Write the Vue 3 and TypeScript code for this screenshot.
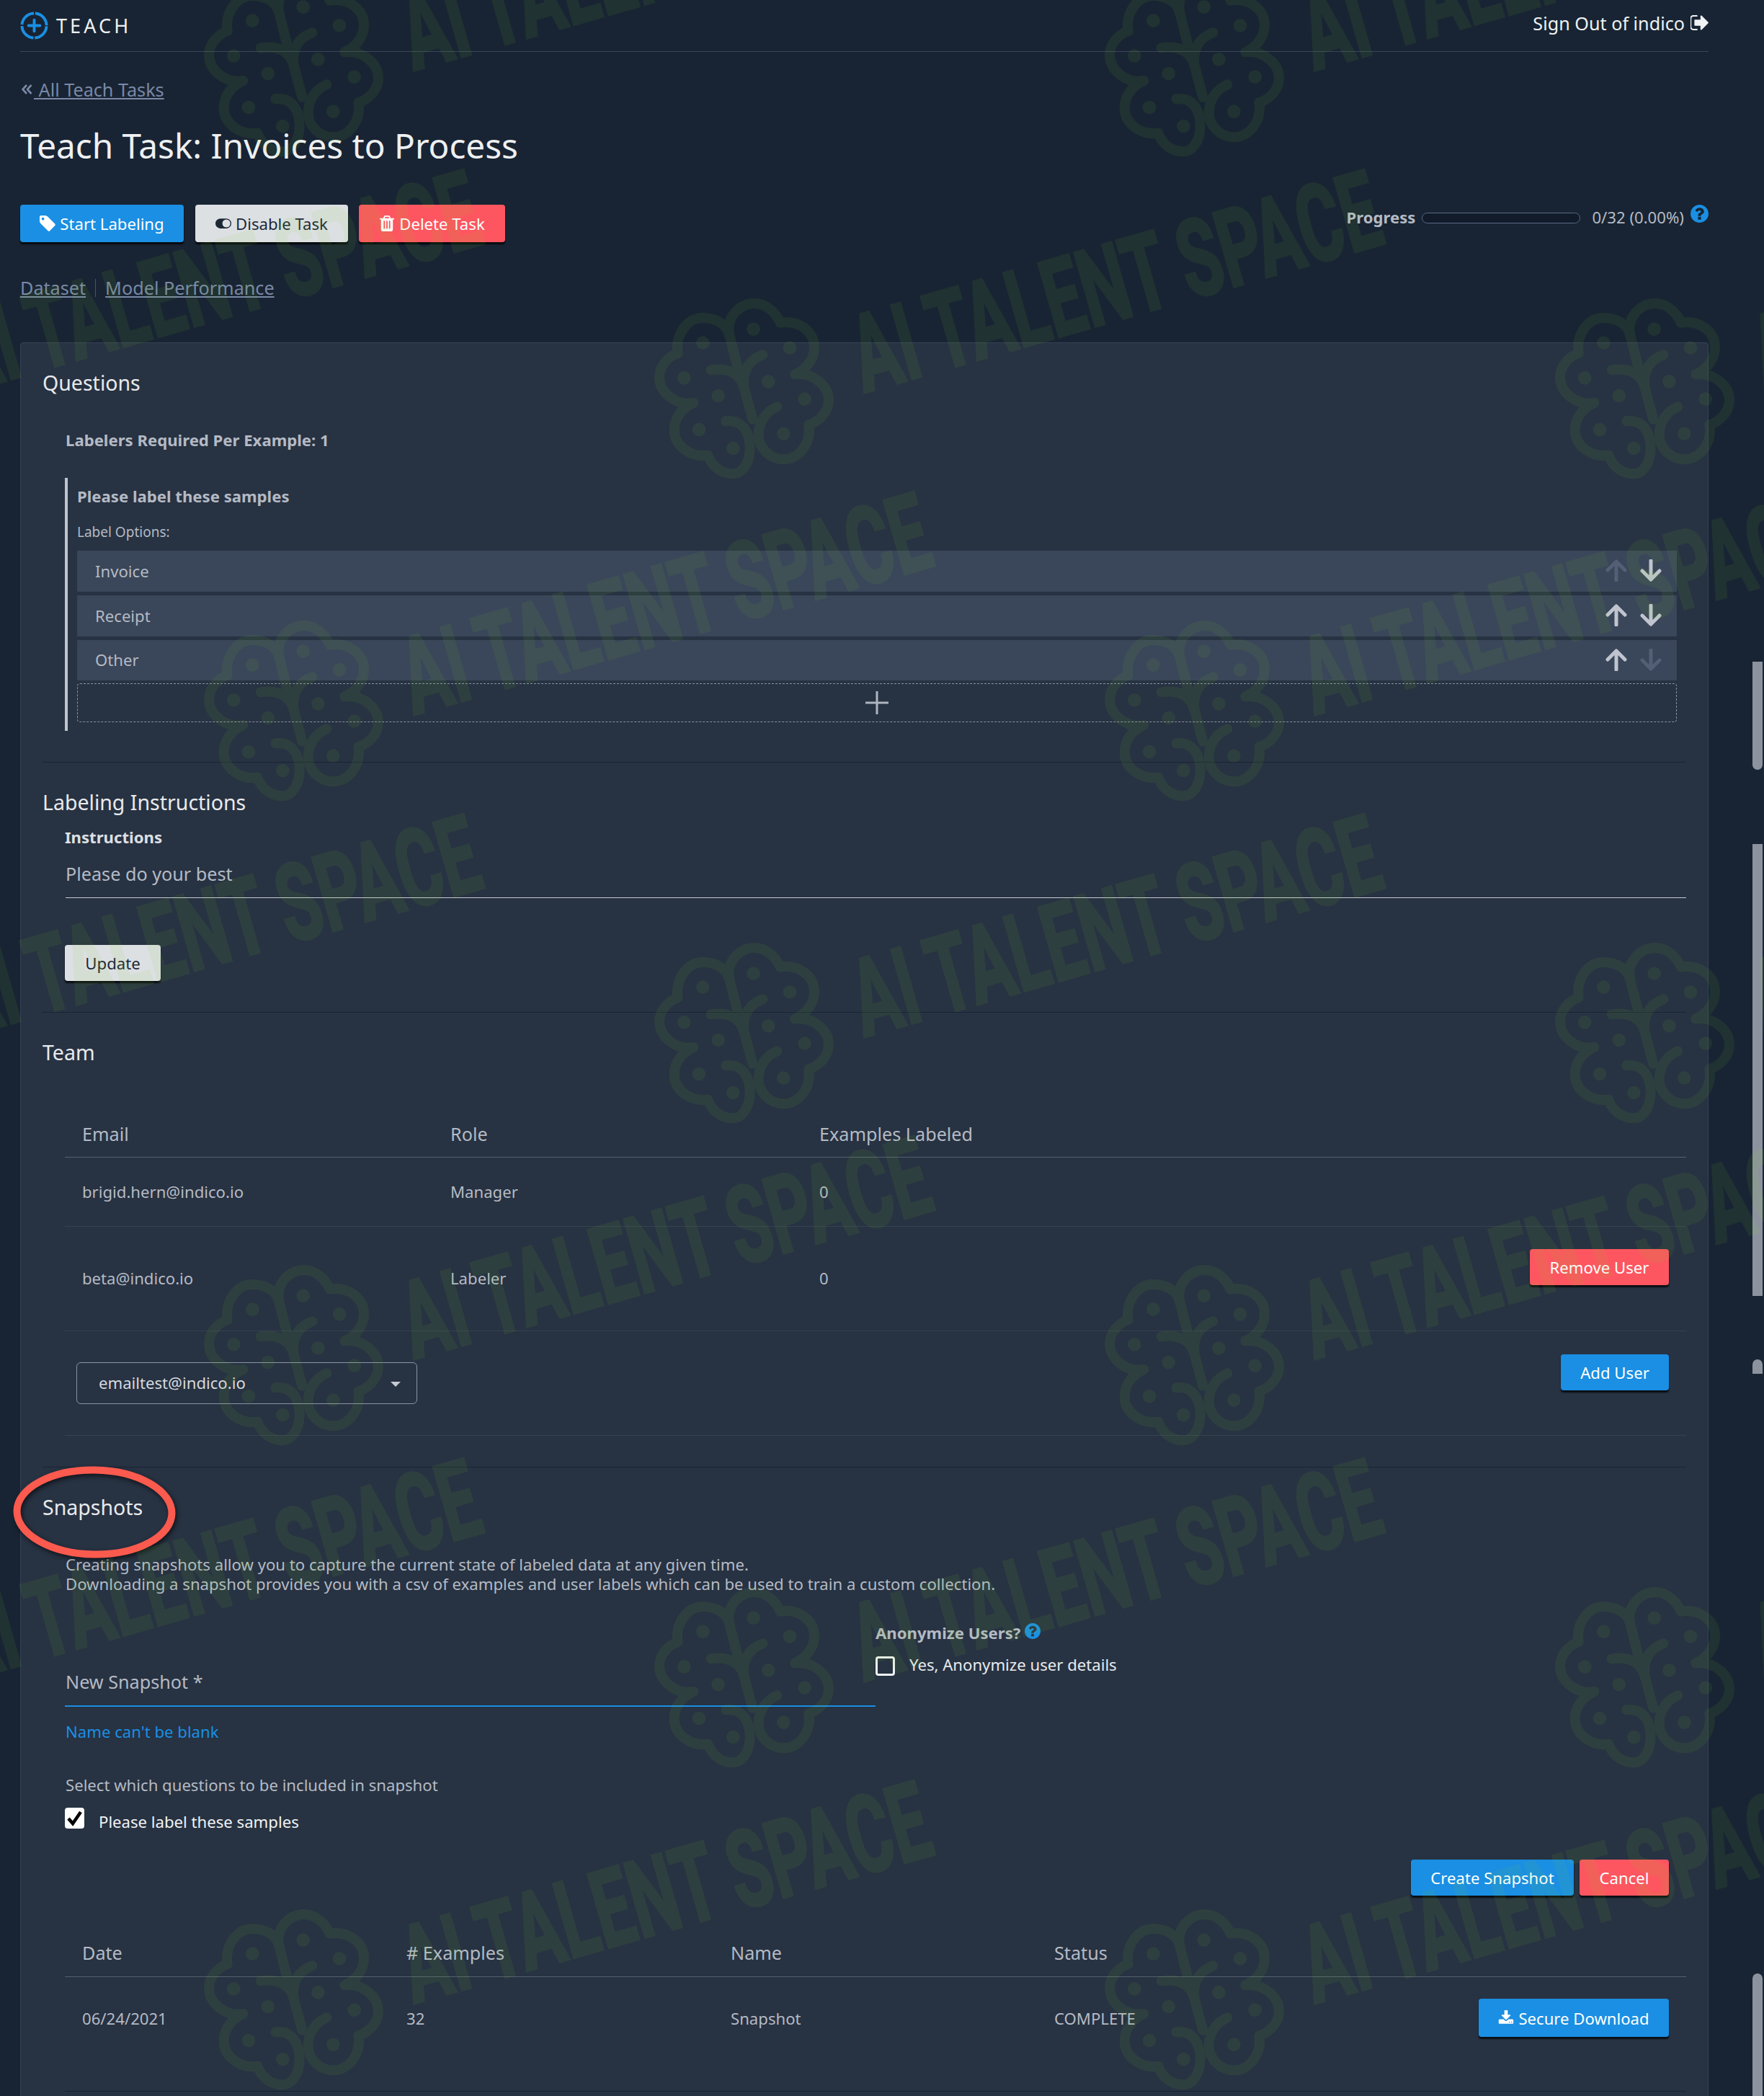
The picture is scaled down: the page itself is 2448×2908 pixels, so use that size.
<template>
  <div class="page">
    <div class="wrap">
      <header class="topbar">
        <svg class="logo" viewBox="0 0 40 40">
          <circle cx="20" cy="20" r="17.5" fill="none" stroke="#1a8fe3" stroke-width="4" stroke-dasharray="25.5 2" stroke-dashoffset="-1" />
          <path d="M20 12v16M12 20h16" fill="none" stroke="#1a8fe3" stroke-width="4" stroke-linecap="round" />
        </svg>
        <span class="brand">TEACH</span>
        <span class="signout">
          Sign Out of indico
          <svg class="signout-icon" viewBox="128 256 1504 1280"><path fill="#f0f2f4" :d="icons.signOut" /></svg>
        </span>
      </header>

      <div class="back">
        <svg class="back-arrows" viewBox="0 0 15 14"><path d="M7 1 1.5 7 7 13M13.5 1 8 7l5.5 6" /></svg>
        <a class="link"> All Teach Tasks</a>
      </div>
      <h1 class="title">Teach Task: Invoices to Process</h1>

      <div class="actions">
        <button class="btn blue"><svg class="ico" viewBox="128 128 1536 1536"><path fill="currentColor" :d="icons.tag" /></svg>Start Labeling</button>
        <button class="btn grey"><svg class="ico toggle" viewBox="0 256 2048 1280"><path fill="currentColor" :d="icons.toggle" /></svg>Disable Task</button>
        <button class="btn red"><svg class="ico" viewBox="128 128 1536 1536"><path fill="currentColor" :d="icons.trash" /></svg>Delete Task</button>
        <div class="progress">
          <strong>Progress</strong>
          <span class="bar"></span>
          <span class="count">0/32 (0.00%)</span>
          <svg class="help" viewBox="128 128 1536 1536"><path fill="#1a8fe3" :d="icons.help" /></svg>
        </div>
      </div>

      <nav class="links">
        <a class="link">Dataset</a>
        <span class="sep"></span>
        <a class="link">Model Performance</a>
      </nav>

      <main class="panel">
        <section>
          <h2>Questions</h2>
          <div class="required">Labelers Required Per Example: 1</div>
          <div class="question">
            <div class="q-title">Please label these samples</div>
            <div class="q-sub">Label Options:</div>
            <div class="options">
              <div v-for="(opt, i) in options" :key="opt" class="option">
                <span>{{ opt }}</span>
                <span class="arrows">
                  <svg class="arrow" :class="{ off: i === 0 }" viewBox="0 0 30 31"><path d="M15 29V3M3 15 15 3l12 12" /></svg>
                  <svg class="arrow" :class="{ off: i === options.length - 1 }" viewBox="0 0 30 31"><path d="M15 2v26M3 16l12 12 12-12" /></svg>
                </span>
              </div>
            </div>
            <div class="add">
              <svg class="plus" viewBox="0 0 34 34"><path d="M17 1v32M1 17h32" /></svg>
            </div>
          </div>
        </section>

        <section class="divided">
          <h2>Labeling Instructions</h2>
          <div class="instr-label">Instructions</div>
          <div class="instr-input">Please do your best</div>
          <button class="btn grey update">Update</button>
        </section>

        <section class="divided">
          <h2>Team</h2>
          <div class="team table">
            <div class="t-head team-cols">
              <span>Email</span><span>Role</span><span>Examples Labeled</span>
            </div>
            <div v-for="m in members" :key="m.email" class="t-row team-cols" :class="m.cls">
              <span>{{ m.email }}</span><span>{{ m.role }}</span><span>0</span>
              <button v-if="m.cls === 'second'" class="btn red remove">Remove User</button>
            </div>
            <div class="t-row add-row">
              <div class="select">emailtest@indico.io<i class="caret"></i></div>
              <button class="btn blue add-user">Add User</button>
            </div>
          </div>
        </section>

        <section class="divided snap">
          <svg class="circle" viewBox="0 0 226 128">
            <ellipse cx="113" cy="64" rx="107.5" ry="58.5" transform="rotate(1 113 64)" />
          </svg>
          <h2>Snapshots</h2>
          <p class="intro">
            Creating snapshots allow you to capture the current state of labeled data at any given time.<br />
            Downloading a snapshot provides you with a csv of examples and user labels which can be used to train a custom collection.
          </p>
          <div class="snap-form">
            <div class="snap-left">
              <div class="snap-input">New Snapshot *</div>
              <div class="snap-error">Name can't be blank</div>
            </div>
            <div class="snap-right">
              <div class="anon">
                Anonymize Users?
                <svg class="help small" viewBox="128 128 1536 1536"><path fill="#1a8fe3" :d="icons.help" /></svg>
              </div>
              <label class="anon-check"><i class="box"></i>Yes, Anonymize user details</label>
            </div>
          </div>
          <div class="select-q">Select which questions to be included in snapshot</div>
          <label class="q-check">
            <svg class="checked" viewBox="0 0 27 29">
              <rect width="27" height="29" rx="4" fill="#fff" />
              <path d="M5 15l6 7L22 6" fill="none" stroke="#000" stroke-width="4.5" />
            </svg>
            Please label these samples
          </label>
          <div class="snap-actions">
            <button class="btn blue create">Create Snapshot</button>
            <button class="btn red cancel">Cancel</button>
          </div>
          <div class="table">
            <div class="t-head snap-cols">
              <span>Date</span><span># Examples</span><span>Name</span><span>Status</span>
            </div>
            <div class="t-row snap-cols last">
              <span>06/24/2021</span><span>32</span><span>Snapshot</span><span>COMPLETE</span>
              <button class="btn blue download"><svg class="ico" viewBox="0 128 1792 1536"><path fill="currentColor" :d="icons.download" /></svg>Secure Download</button>
            </div>
          </div>
        </section>
      </main>
    </div>

    <i v-for="s in scrollbars" :key="s.top" class="scroll" :class="s.cls" :style="{ top: s.top + 'px', height: s.height + 'px' }"></i>

    <svg class="watermark" width="2448" height="2908" viewBox="0 0 2448 2908">
      <g v-for="m in marks" :key="m.x + '-' + m.y" :transform="`translate(${m.x} ${m.y})`">
        <g transform="scale(0.3333)">
          <path v-for="d in flowerStrokes" :key="d" :d="d" fill="none" stroke="#7ed321" stroke-width="42" stroke-linecap="round" stroke-linejoin="round" />
          <circle v-for="c in flowerDots" :key="c[0]" :cx="c[0]" :cy="c[1]" r="28" fill="#7ed321" />
        </g>
        <text x="0" y="0" transform="translate(304 140) rotate(-16)" textLength="755" lengthAdjust="spacingAndGlyphs" class="wm-text">AI TALENT SPACE</text>
      </g>
    </svg>
  </div>
</template>

<script setup lang="ts">
const options = ['Invoice', 'Receipt', 'Other']

const members = [
  { email: 'brigid.hern@indico.io', role: 'Manager', cls: 'first' },
  { email: 'beta@indico.io', role: 'Labeler', cls: 'second' }
]

const scrollbars = [
  { top: 918, height: 150, cls: 'round-b' },
  { top: 1171, height: 627, cls: '' },
  { top: 1886, height: 20, cls: 'round-t' },
  { top: 2738, height: 170, cls: 'round-t' }
]

// watermark repeats on a staggered grid
const marks: { x: number; y: number }[] = []
for (let k = -1; k <= 5; k++) {
  const xs = k % 2 === 0 ? [-355, 895, 2145] : [270, 1520]
  for (const x of xs) marks.push({ x, y: 405 + k * 447 })
}

const flowerStrokes = [
  'M385 310L352 180C335 100 400 48 455 48C505 48 545 85 563 128C640 115 705 165 705 230C705 280 670 325 625 343C700 335 765 390 765 450C765 500 725 540 682 553C695 630 640 697 580 697C520 697 473 650 473 595C473 535 510 495 550 478',
  'M337 538C410 530 437 590 437 650C437 710 405 757 368 757C320 757 280 730 262 680C190 690 122 640 122 575C122 520 160 480 202 462C130 475 60 420 60 355C60 310 95 270 137 255C125 180 175 108 240 108C290 108 340 130 352 180',
  'M275 325C350 315 395 340 412 395L448 530',
  'M490 262C440 280 405 320 412 395'
]

const flowerDots = [
  [452, 155], [241, 212], [603, 232], [163, 358], [514, 373],
  [305, 432], [665, 446], [225, 573], [577, 590], [367, 651]
]

const icons = {
  tag: 'M576 448q0-53-37.5-90.5t-90.5-37.5-90.5 37.5-37.5 90.5 37.5 90.5 90.5 37.5 90.5-37.5 37.5-90.5zm1067 576q0 53-37 90l-491 492q-39 37-91 37-53 0-90-37l-715-716q-38-37-64.5-101t-26.5-117v-416q0-52 38-90t90-38h416q53 0 117 26.5t102 64.5l715 714q37 39 37 91z',
  toggle: 'M0 896q0-130 51-248.5t136.5-204 204-136.5 248.5-51h768q130 0 248.5 51t204 136.5 136.5 204 51 248.5-51 248.5-136.5 204-204 136.5-248.5 51h-768q-130 0-248.5-51t-204-136.5-136.5-204-51-248.5zm1408 512q104 0 198.5-40.5t163.5-109.5 109.5-163.5 40.5-198.5-40.5-198.5-109.5-163.5-163.5-109.5-198.5-40.5-198.5 40.5-163.5 109.5-109.5 163.5-40.5 198.5 40.5 198.5 109.5 163.5 163.5 109.5 198.5 40.5z',
  trash: 'M704 1376v-704q0-14-9-23t-23-9h-64q-14 0-23 9t-9 23v704q0 14 9 23t23 9h64q14 0 23-9t9-23zm256 0v-704q0-14-9-23t-23-9h-64q-14 0-23 9t-9 23v704q0 14 9 23t23 9h64q14 0 23-9t9-23zm256 0v-704q0-14-9-23t-23-9h-64q-14 0-23 9t-9 23v704q0 14 9 23t23 9h64q14 0 23-9t9-23zm-544-992h448l-48-117q-7-9-17-11h-317q-10 2-17 11zm928 32v64q0 14-9 23t-23 9h-96v948q0 83-47 143.5t-113 60.5h-832q-66 0-113-58.5t-47-141.5v-952h-96q-14 0-23-9t-9-23v-64q0-14 9-23t23-9h309l70-167q15-37 54-63t79-26h320q40 0 79 26t54 63l70 167h309q14 0 23 9t9 23z',
  signOut: 'M704 1440q0 4 1 20t.5 26.5-3 23.5-10 19.5-20.5 6.5h-320q-119 0-203.5-84.5t-84.5-203.5v-704q0-119 84.5-203.5t203.5-84.5h320q13 0 22.5 9.5t9.5 22.5q0 4 1 20t.5 26.5-3 23.5-10 19.5-20.5 6.5h-320q-66 0-113 47t-47 113v704q0 66 47 113t113 47h312l11.5 1 11.5 3 8 5.5 7 9 2 13.5zm928-544q0 26-19 45l-544 544q-19 19-45 19t-45-19-19-45v-288h-448q-26 0-45-19t-19-45v-384q0-26 19-45t45-19h448v-288q0-26 19-45t45-19 45 19l544 544q19 19 19 45z',
  help: 'M1024 1376v-192q0-14-9-23t-23-9h-192q-14 0-23 9t-9 23v192q0 14 9 23t23 9h192q14 0 23-9t9-23zm256-672q0-88-55.5-163t-138.5-116-170-41q-243 0-371 213-15 24 8 42l132 100q7 6 19 6 16 0 25-12 53-68 86-92 34-24 86-24 48 0 85.5 26t37.5 59q0 38-20 61t-68 45q-63 28-115.5 86.5t-52.5 125.5v36q0 14 9 23t23 9h192q14 0 23-9t9-23q0-19 21.5-49.5t54.5-49.5q32-18 49-28.5t46-35 44.5-48 28-60.5 12.5-81zm384 192q0 209-103 385.5t-279.5 279.5-385.5 103-385.5-103-279.5-279.5-103-385.5 103-385.5 279.5-279.5 385.5-103 385.5 103 279.5 279.5 103 385.5z',
  download: 'M1344 1344q0-26-19-45t-45-19-45 19-19 45 19 45 45 19 45-19 19-45zm256 0q0-26-19-45t-45-19-45 19-19 45 19 45 45 19 45-19 19-45zm128-224v320q0 40-28 68t-68 28h-1472q-40 0-68-28t-28-68v-320q0-40 28-68t68-28h465l135 136q58 56 136 56t136-56l136-136h464q40 0 68 28t28 68zm-325-569q17 41-14 70l-448 448q-18 19-45 19t-45-19l-448-448q-31-29-14-70 17-39 59-39h256v-448q0-26 19-45t45-19h256q26 0 45 19t19 45v448h256q42 0 59 39z'
}
</script>

<style>
html,
body {
  margin: 0;
  background: #182433;
}
</style>

<style scoped>
.page {
  position: relative;
  width: 2448px;
  height: 2908px;
  overflow: hidden;
  background: #182433;
  color: #b4bac4;
  font-family: "Noto Sans", "Open Sans", sans-serif;
  font-size: 22.15px;
}

.wrap {
  width: 2343px;
  margin-left: 28px;
}

.topbar {
  display: flex;
  align-items: center;
  height: 71px;
  border-bottom: 1px solid #3a4657;
  box-sizing: content-box;
  color: #eef0f2;
}

.logo {
  width: 39px;
  height: 39px;
  margin-top: -1px;
}

.brand {
  margin-left: 11px;
  font-size: 27px;
  letter-spacing: 4.1px;
}

.signout {
  display: flex;
  align-items: center;
  margin-left: auto;
  font-size: 25.2px;
  margin-top: -8px;
}

.signout-icon {
  width: 25px;
  height: 21px;
  margin-left: 8px;
}

.back {
  display: flex;
  align-items: center;
  margin-top: 33px;
  padding-left: 2px;
  height: 38px;
  font-size: 25.2px;
  white-space: pre;
}

.back-arrows {
  width: 15px;
  height: 14px;
  margin: -1px 2px 0 0;
  fill: none;
  stroke: #7a88a6;
  stroke-width: 2.6;
}

.link {
  color: #7a88a6;
  text-decoration: underline;
}

.title {
  margin: 33px 0 0;
  height: 52px;
  line-height: 52px;
  font-size: 47.7px;
  font-weight: 400;
  color: #eef0f2;
}

.actions {
  display: flex;
  align-items: flex-start;
  gap: 16px;
  margin-top: 56px;
}

.btn {
  display: inline-flex;
  align-items: center;
  justify-content: center;
  box-sizing: border-box;
  height: 52px;
  padding: 0;
  border: 0;
  border-radius: 4px;
  font-family: inherit;
  font-size: 22.15px;
  box-shadow: 0 3px 2px rgba(0, 0, 0, 0.75);
}

.blue {
  background: #1a8fe3;
  color: #fff;
}

.grey {
  background: #dce0e3;
  color: #1d2836;
}

.red {
  background: #fd5660;
  color: #fff;
}

.actions .blue {
  width: 227px;
}

.actions .grey {
  width: 212px;
}

.actions .red {
  width: 203px;
  margin-left: -1px;
}

.ico {
  width: 22px;
  height: 22px;
  margin-right: 6px;
}

.ico.toggle {
  width: 22px;
  height: 16px;
  margin-right: 6px;
}

.progress {
  display: flex;
  align-items: center;
  height: 36px;
  margin-left: auto;
  line-height: 32px;
}

.bar {
  box-sizing: border-box;
  width: 220px;
  height: 15px;
  margin: 0 16px 0 9px;
  border: 1px solid #5a6885;
  border-radius: 8px;
  background: #121b29;
}

.progress strong,
.count {
  margin-top: -3px;
}

.help {
  align-self: flex-start;
  width: 25px;
  height: 25px;
  margin-left: 9px;
}

.links {
  display: flex;
  align-items: flex-start;
  margin-top: 46px;
  height: 36px;
  line-height: 34px;
  font-size: 25.2px;
}

.sep {
  width: 1px;
  height: 25px;
  margin: 5px 13px 0;
  background: #46536a;
}

.panel {
  box-sizing: border-box;
  height: 2500px;
  margin-top: 57px;
  padding: 0 30px;
  border: 1px solid #364254;
  border-radius: 4px 4px 0 0;
  background: #273242;
}

section {
  position: relative;
}

h2 {
  height: 40px;
  margin: 0;
  padding-top: 36px;
  box-sizing: content-box;
  line-height: 38px;
  font-size: 28.5px;
  font-weight: 400;
  color: #e8eaed;
}

.required {
  height: 36px;
  margin: 40px 0 0 32px;
  line-height: 36px;
  font-weight: 700;
}

.question {
  box-sizing: border-box;
  height: 351px;
  margin: 35px 0 43px 31px;
  padding: 8px 13px 0 13px;
  border-left: 4px solid #c0c4cc;
}

.q-title {
  height: 36px;
  line-height: 34px;
  font-weight: 700;
}

.q-sub {
  height: 30px;
  margin-top: 16px;
  line-height: 30px;
  font-size: 19px;
}

.options {
  display: flex;
  flex-direction: column;
  gap: 5px;
  margin-top: 11px;
}

.option {
  display: flex;
  align-items: center;
  justify-content: space-between;
  height: 57px;
  padding: 0 21px 0 25px;
  background: #3a4659;
}

.option:last-child {
  height: 56px;
}

.option > span:first-child {
  margin-top: -2px;
}

.arrows {
  display: flex;
  gap: 18px;
  margin-top: -2px;
}

.arrow {
  width: 30px;
  height: 31px;
  fill: none;
  stroke: #c0c4cf;
  stroke-width: 5;
  stroke-linecap: round;
  stroke-linejoin: round;
}

.arrow.off {
  stroke: #535f74;
}

.add {
  display: flex;
  align-items: center;
  justify-content: center;
  box-sizing: border-box;
  height: 54px;
  margin-top: 4px;
  border: 1px dashed #8a92a0;
  border-radius: 4px;
}

.plus {
  width: 34px;
  height: 34px;
  fill: none;
  stroke: #aeb4c0;
  stroke-width: 3;
}

.divided {
  border-top: 1px solid #182433;
}

.instr-label {
  height: 36px;
  margin: 10px 0 0 31px;
  line-height: 34px;
  font-weight: 700;
  color: #dde0e4;
}

.instr-input {
  box-sizing: content-box;
  height: 53px;
  margin: 12px 0 0 32px;
  border-bottom: 1px solid #c8ccd2;
  line-height: 40px;
  font-size: 25.2px;
}

.update {
  width: 133px;
  height: 50px;
  margin: 65px 0 43px 31px;
}

.table {
  margin-left: 31px;
}

.team {
  margin-top: 74px;
}

.t-head {
  height: 50px;
  border-bottom: 1px solid #55606f;
  line-height: 36px;
  font-size: 25.2px;
}

.t-row {
  position: relative;
  border-bottom: 1px solid #364150;
}

.team-cols {
  display: grid;
  grid-template-columns: 511px 512px 1fr;
  padding: 0 24px;
}

.team-cols.t-row {
  align-items: center;
  padding-bottom: 2px;
}

.first {
  height: 93px;
}

.second {
  height: 142px;
}

.remove {
  position: absolute;
  top: 31px;
  right: 24px;
  width: 193px;
  height: 50px;
}

.add-row {
  display: flex;
  justify-content: space-between;
  align-items: flex-start;
  height: 144px;
  padding: 0 24px 0 16px;
  margin-bottom: 43px;
}

.select {
  position: relative;
  box-sizing: border-box;
  width: 473px;
  height: 58px;
  margin-top: 43px;
  padding-left: 30px;
  border: 1px solid #8a94a3;
  border-radius: 6px;
  line-height: 54px;
  color: #d5d8dd;
}

.caret {
  position: absolute;
  top: 26px;
  right: 22px;
  border-top: 7px solid #c5cad2;
  border-left: 7px solid transparent;
  border-right: 7px solid transparent;
}

.add-user {
  width: 150px;
  height: 50px;
  margin-top: 32px;
}

.circle {
  position: absolute;
  top: -2px;
  left: -41px;
  width: 226px;
  height: 128px;
  overflow: visible;
  filter: drop-shadow(2px 3px 3px rgba(0, 0, 0, 0.6));
}

.circle ellipse {
  fill: none;
  stroke: #fb5a4e;
  stroke-width: 10;
}

.intro {
  margin: 45px 0 0 32px;
  line-height: 27px;
}

.snap-form {
  display: flex;
  margin-top: 37px;
}

.snap-left {
  width: 1125px;
  margin-left: 31px;
}

.snap-input {
  box-sizing: content-box;
  height: 53px;
  margin-top: 65px;
  padding-left: 1px;
  border-bottom: 2px solid #1a8fe3;
  line-height: 40px;
  font-size: 25.2px;
}

.snap-error {
  height: 36px;
  margin-top: 17px;
  padding-left: 1px;
  line-height: 34px;
  color: #1a8fe3;
}

.anon {
  display: flex;
  height: 36px;
  line-height: 34px;
  font-weight: 700;
}

.help.small {
  width: 22px;
  height: 22px;
  margin: 4px 0 0 6px;
}

.anon-check {
  display: flex;
  align-items: center;
  margin-top: 8px;
  color: #e8eaed;
}

.box {
  box-sizing: border-box;
  width: 27px;
  height: 27px;
  margin: 6px 20px 0 0;
  border: 3px solid #eef0f2;
  border-radius: 4px;
}

.select-q {
  height: 36px;
  margin: 38px 0 0 32px;
  line-height: 34px;
}

.q-check {
  display: flex;
  align-items: center;
  height: 38px;
  margin: 13px 0 0 31px;
  color: #f0f2f4;
}

.checked {
  align-self: flex-start;
  width: 27px;
  height: 29px;
  margin-right: 20px;
}

.snap-actions {
  display: flex;
  justify-content: flex-end;
  gap: 8px;
  margin-top: 34px;
  padding-right: 24px;
}

.create {
  width: 226px;
  height: 50px;
}

.cancel {
  width: 124px;
  height: 50px;
}

.snap-actions + .table {
  margin-top: 61px;
}

.snap-cols {
  display: grid;
  grid-template-columns: 450px 450px 449px 1fr;
  padding: 0 24px;
}

.snap-cols.t-head {
  height: 51px;
}

.snap-cols.last {
  padding-top: 39px;
  box-sizing: content-box;
  height: 119px;
  line-height: 36px;
  border-bottom-color: #182433;
}

.download {
  position: absolute;
  top: 30px;
  right: 24px;
  width: 264px;
  height: 53px;
}

.scroll {
  position: absolute;
  right: 2px;
  width: 14px;
  background: #8d939e;
}

.round-b {
  border-radius: 0 0 7px 7px;
}

.round-t {
  border-radius: 7px 7px 0 0;
}

.watermark {
  position: absolute;
  top: 0;
  left: 0;
  pointer-events: none;
  opacity: 0.08;
}

.wm-text {
  font-family: "Roboto", sans-serif;
  font-weight: 700;
  font-size: 149px;
  fill: #7ed321;
  stroke: #7ed321;
  stroke-width: 4px;
}
</style>
